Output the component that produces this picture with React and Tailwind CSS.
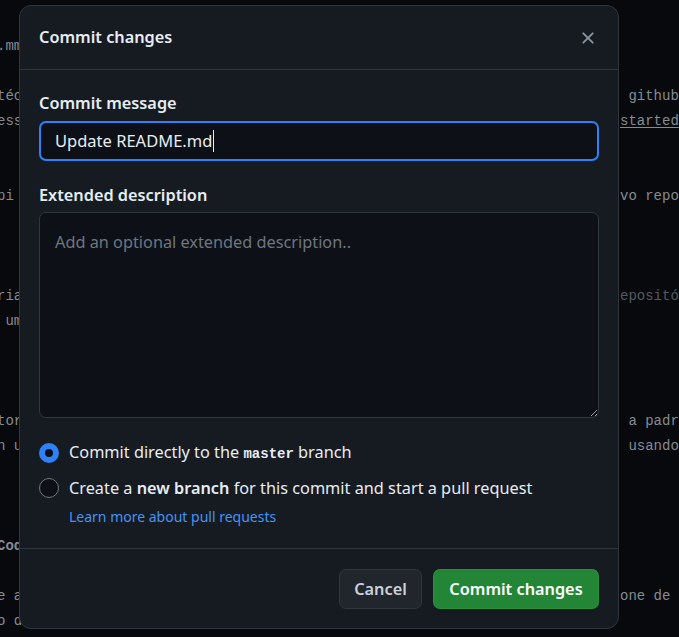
import React from 'react';

const codeLines = [
  ['ntas úteis', ''],
  ['', ''],
  ['.mm', ''],
  ['', ''],
  ['téc', ' github'],
  ['ess', 'started'],
  ['', ''],
  ['', ''],
  ['pi', 'vo repo'],
  ['', ''],
  ['', ''],
  ['', ''],
  ['ria', 'epositó'],
  [' um', ''],
  ['', ''],
  ['', ''],
  ['', ''],
  ['tor', ' a padr'],
  ['n u', ' usando'],
  ['', ''],
  ['', ''],
  ['', ''],
  ['Cod', ''],
  ['', ''],
  ['e a', 'one de'],
  ['o d', ''],
];

function EditorBackground() {
  return (
    <div className="-mt-[16px] font-['Liberation_Mono',monospace] text-[14px] leading-[25px] text-[#868b92]">
      {codeLines.map(([left, right], i) => (
        <div key={i} className="grid h-[25px] grid-cols-[620px_1fr] whitespace-pre">
          <span className={`-ml-[3px] overflow-hidden ${i === 22 ? 'font-bold' : ''}`}>{left}</span>
          <span
            className={
              i === 5
                ? 'underline underline-offset-2'
                : i === 12
                ? 'text-[#555a60]'
                : ''
            }
          >
            {right}
          </span>
        </div>
      ))}
    </div>
  );
}

function CloseIcon() {
  return (
    <svg width="20" height="20" viewBox="0 0 16 16" fill="currentColor">
      <path d="M3.72 3.72a.75.75 0 0 1 1.06 0L8 6.94l3.22-3.22a.749.749 0 0 1 1.275.326.749.749 0 0 1-.215.734L9.06 8l3.22 3.22a.749.749 0 0 1-.326 1.275.749.749 0 0 1-.734-.215L8 9.06l-3.22 3.22a.751.751 0 0 1-1.042-.018.751.751 0 0 1-.018-1.042L6.94 8 3.72 4.78a.75.75 0 0 1 0-1.06Z" />
    </svg>
  );
}

function Radio({ checked }) {
  return checked ? (
    <span className="h-5 w-5 shrink-0 rounded-full border-[6px] border-[#2f81f7] bg-[#0d1117]" />
  ) : (
    <span className="h-5 w-5 shrink-0 rounded-full border border-[#6e7681] bg-[#0d1117]" />
  );
}

export default function App() {
  return (
    <div className="relative h-[637px] w-[679px] overflow-hidden bg-[#07090c]">
      <EditorBackground />

      {/* Commit dialog */}
      <div className="absolute left-[19px] top-[5px] flex h-[624px] w-[600px] flex-col rounded-xl border border-[#30363d] bg-[#161b22] font-['Noto_Sans',sans-serif] text-[#e6edf3]">
        <div className="flex h-[64px] shrink-0 items-center justify-between border-b border-[#30363d] pl-[19px] pr-[20px]">
          <h1 className="text-[16.3px] font-semibold">Commit changes</h1>
          <button className="text-[#8b949e]">
            <CloseIcon />
          </button>
        </div>

        <div className="flex flex-1 flex-col px-[19px] pt-[20px]">
          <label className="text-[16.3px] font-semibold leading-[26px]">Commit message</label>
          <div className="mt-[5px] flex h-10 items-center rounded-[7px] border-2 border-[#2f81f7] bg-[#0d1117] pl-[14px] text-[16.5px]">
            Update README.md
            <span className="ml-px h-[22px] w-px bg-[#e6edf3]" />
          </div>

          <label className="mt-[21px] text-[16.3px] font-semibold leading-[26px]">Extended description</label>
          <textarea
            className="mt-[4px] h-[206px] w-full resize-y rounded-[7px] border border-[#30363d] bg-[#0d1117] px-[15px] pt-[16px] text-[16.3px] leading-[26px] text-[#e6edf3] outline-none [color-scheme:dark] placeholder:text-[#6e7681]"
            placeholder="Add an optional extended description.."
          />

          <div className="mt-[21px] flex items-center gap-[10px] text-[16.3px] leading-[26px]">
            <Radio checked />
            <span>
              Commit directly to the{' '}
              <code className="font-['Liberation_Mono',monospace] text-[14px] font-bold">master</code> branch
            </span>
          </div>
          <div className="mt-[8px] flex items-center gap-[10px] text-[16.3px] leading-[26px]">
            <Radio />
            <span>
              Create a <strong className="font-semibold">new branch</strong> for this commit and start a pull request
            </span>
          </div>
          <a className="ml-[30px] mt-[5px] text-[14px] leading-[22px] text-[#4493f8]">Learn more about pull requests</a>
        </div>

        <div className="flex shrink-0 justify-end gap-[11px] border-t border-[#30363d] px-[19px] pb-[19px] pt-[20px]">
          <button className="h-10 w-[83px] rounded-[7px] border border-[#30363d] bg-[#21262d] text-[16.3px] font-semibold text-[#c9d1d9]">
            Cancel
          </button>
          <button className="h-10 w-[166px] rounded-[7px] border border-[#2ea043]/40 bg-[#238636] text-[16.3px] font-semibold text-white">
            Commit changes
          </button>
        </div>
      </div>
    </div>
  );
}
